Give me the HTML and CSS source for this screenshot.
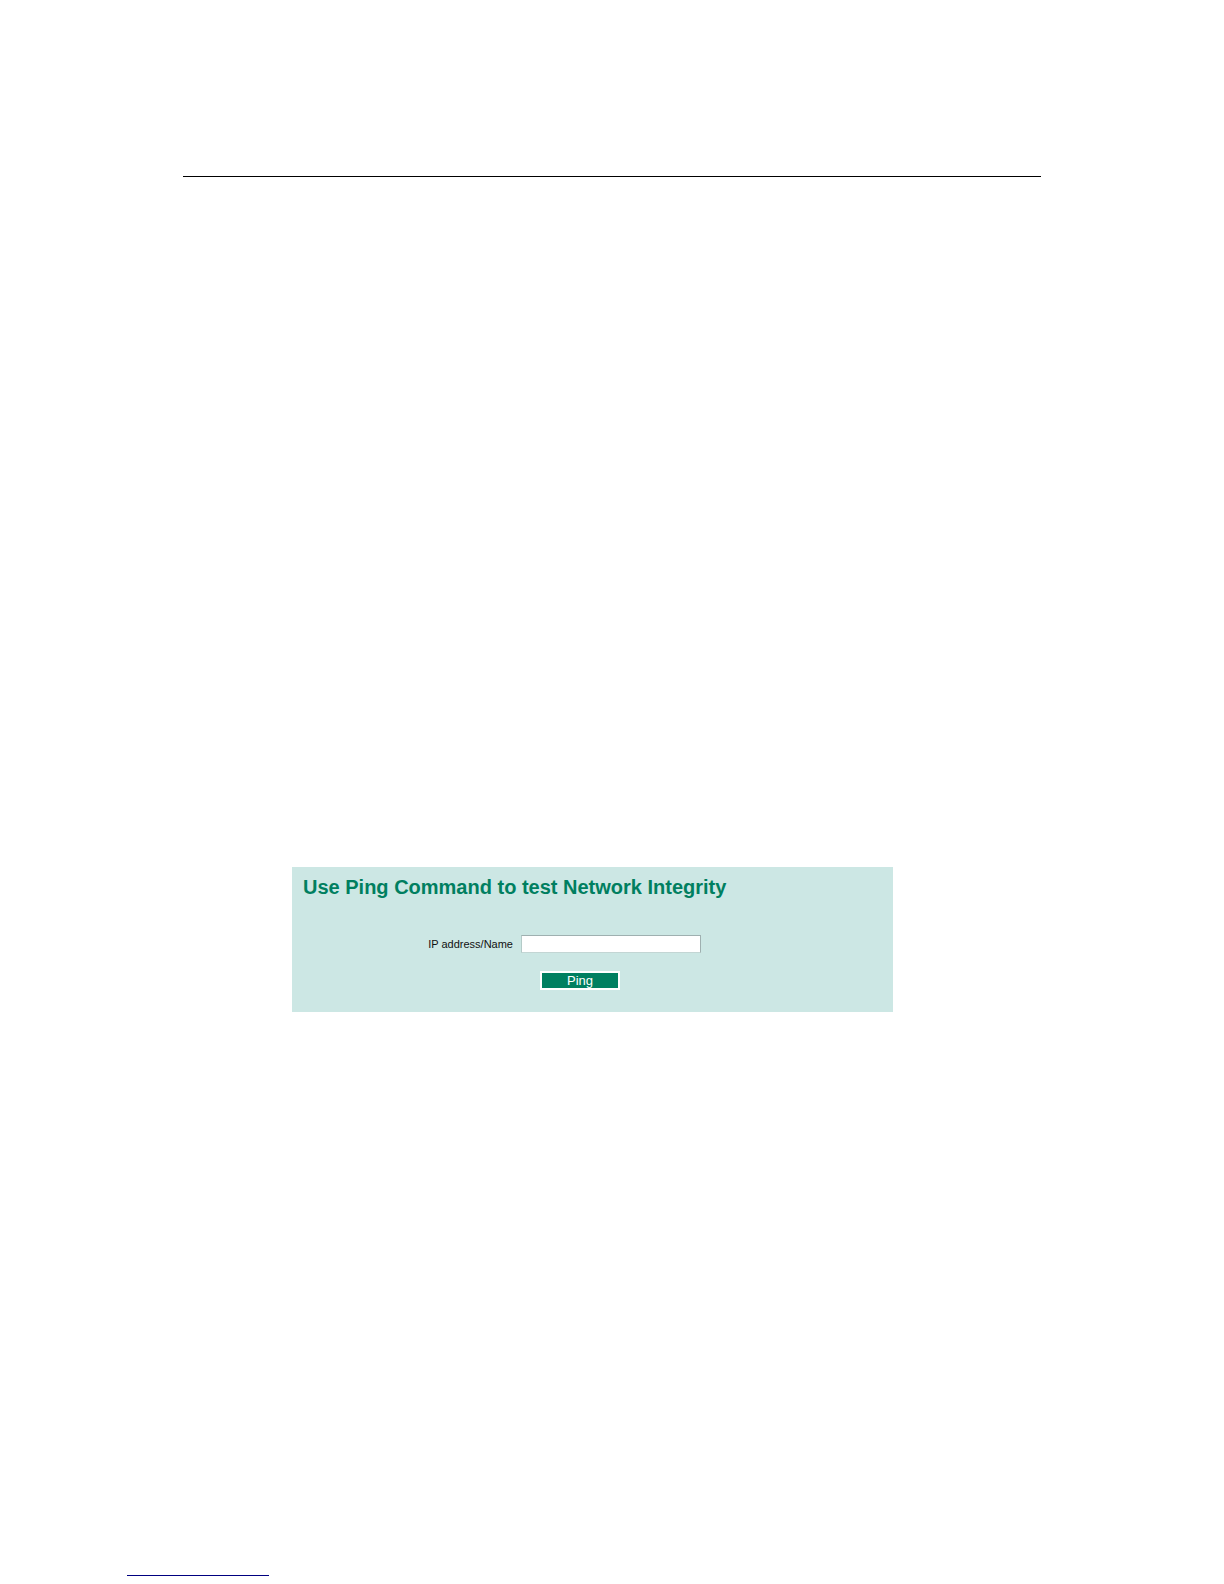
FILE: index.html
```html
<!DOCTYPE html>
<html lang="en">
<head>
    <meta charset="UTF-8">
    <meta name="viewport" content="width=device-width, initial-scale=1.0">
    <title>Ping</title>
    <link rel="stylesheet" href="styles.css">
</head>
<body>
    <main class="page">
        <hr class="header-rule">
        <section class="panel">
            <h1>Use Ping Command to test Network Integrity</h1>
            <form class="ping-form">
                <label for="host">IP address/Name</label>
                <input type="text" id="host" name="host">
                <div class="button-container">
                    <button type="button">Ping</button>
                </div>
            </form>
        </section>
    </main>
    <footer class="footer">
        <hr class="footer-rule">
    </footer>
</body>
</html>
```

FILE: styles.css
```css
* {
    box-sizing: border-box;
}
body {
    display: flex;
    flex-direction: column;
    min-height: 100vh;
    margin: 0;
    background-color: #fff;
    font-family: "Liberation Sans", Arial, sans-serif;
}
.page {
    width: 90%;
    max-width: 858px;
    margin: 0 auto;
    padding-top: 176px;
}
.header-rule {
    height: 1px;
    margin: 0;
    border: none;
    background-color: #000;
}
.panel {
    margin: 690px 148px 0 109px;
    padding: 8px 11px 22px;
    background-color: #cce7e4;
}
h1 {
    margin: 0;
    font-size: 20px;
    line-height: 24px;
    color: #007f60;
}
.ping-form {
    display: grid;
    grid-template-columns: 210px 180px;
    column-gap: 8px;
    row-gap: 18px;
    align-items: center;
    margin-top: 36px;
}
label {
    font-size: 11px;
    line-height: 18px;
    text-align: right;
    color: #111;
}
input {
    width: 100%;
    height: 18px;
    padding: 0 4px;
    border: 1px solid;
    border-color: #9fb0b0 #9fb0b0 #c3d6d4 #b4cbc8;
    border-radius: 0;
    background-color: #fff;
    font-family: inherit;
    font-size: 11px;
}
.button-container {
    grid-column: 2;
    padding-left: 19px;
}
button {
    display: block;
    width: 80px;
    height: 19px;
    padding: 0;
    border: 2px solid #fff;
    background-color: #007f60;
    color: #fff;
    font-family: inherit;
    font-size: 13px;
    line-height: 15px;
    cursor: pointer;
}
.footer {
    margin-top: auto;
    padding: 0 127px 8px;
}
.footer-rule {
    width: 142px;
    height: 1px;
    margin: 0;
    border: none;
    background-color: #000080;
}
```
